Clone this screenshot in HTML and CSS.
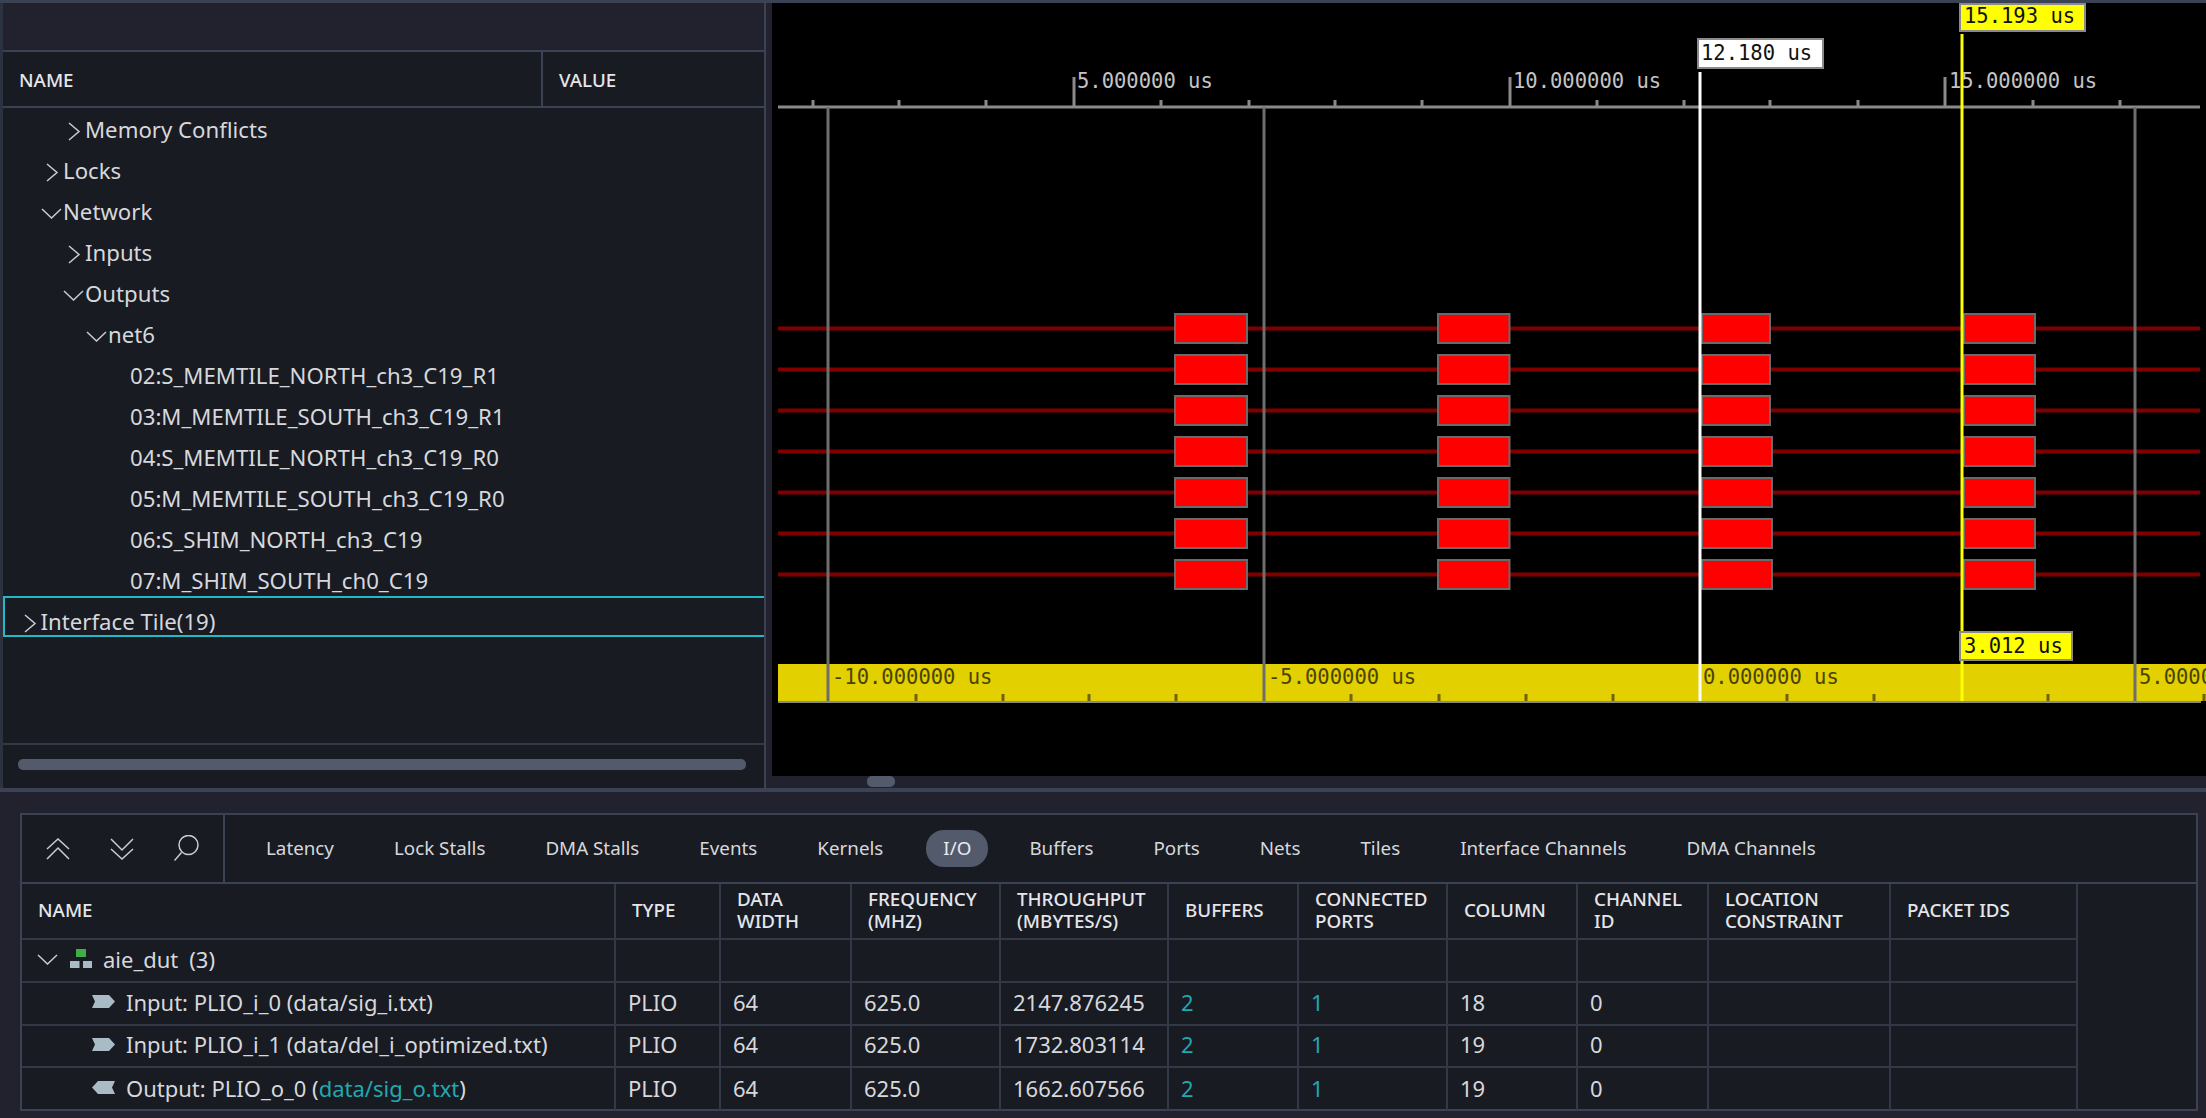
FILE: index.html
```html
<!DOCTYPE html>
<html lang="en">
<head>
    <meta charset="UTF-8">
    <title>Trace View</title>
    <link rel="stylesheet" href="styles.css">
</head>
<body>
    <svg width="0" height="0" class="defs">
        <defs>
            <path id="chev-right" d="M1 1 L11 9.5 L1 18" />
            <path id="chev-down" d="M1 1 L10.5 10 L20 1" />
            <polygon id="port-in" points="0,0 17,0 23,6.5 17,13 0,13 3,6.5" />
            <polygon id="port-out" points="23,0 6,0 0,6.5 6,13 23,13 20,6.5" />
        </defs>
    </svg>

    <div class="top">
        <div class="side">
            <div class="side-band"></div>
            <div class="tree-head">
                <div class="tree-name">NAME</div>
                <div class="tree-value">VALUE</div>
            </div>
            <div class="tree">
                <div class="row lvl2"><svg class="chev-r"><use href="#chev-right"/></svg>Memory Conflicts</div>
                <div class="row lvl1"><svg class="chev-r"><use href="#chev-right"/></svg>Locks</div>
                <div class="row lvl1"><svg class="chev-d"><use href="#chev-down"/></svg>Network</div>
                <div class="row lvl2"><svg class="chev-r"><use href="#chev-right"/></svg>Inputs</div>
                <div class="row lvl2"><svg class="chev-d"><use href="#chev-down"/></svg>Outputs</div>
                <div class="row lvl3"><svg class="chev-d"><use href="#chev-down"/></svg>net6</div>
                <div class="row lvl4">02:S_MEMTILE_NORTH_ch3_C19_R1</div>
                <div class="row lvl4">03:M_MEMTILE_SOUTH_ch3_C19_R1</div>
                <div class="row lvl4">04:S_MEMTILE_NORTH_ch3_C19_R0</div>
                <div class="row lvl4">05:M_MEMTILE_SOUTH_ch3_C19_R0</div>
                <div class="row lvl4">06:S_SHIM_NORTH_ch3_C19</div>
                <div class="row lvl4 last">07:M_SHIM_SOUTH_ch0_C19</div>
                <div class="row lvl0 selected"><svg class="chev-r"><use href="#chev-right"/></svg>Interface Tile(19)</div>
            </div>
            <div class="side-scroll"><div class="side-thumb"></div></div>
        </div>

        <div class="wave-wrap">
            <svg class="wave" width="1434" height="773" viewBox="772 3 1434 773">
                <defs>
                    <g id="sig">
                        <line class="sig-line" x1="778" x2="2200" y1="328.5" y2="328.5"/>
                        <rect class="block" x="1175" y="314" width="72" height="29"/>
                        <rect class="block" x="1438" y="314" width="71.5" height="29"/>
                        <rect class="block" x="1964" y="314" width="71" height="29"/>
                    </g>
                    <path id="ticks" d="M813 100V107M899 100V107M986 100V107M1074 77V107M1161 100V107M1249 100V107M1335 100V107M1422 100V107M1510 77V107M1597 100V107M1684 100V107M1770 100V107M1858 100V107M1945 77V107M2033 100V107M2120 100V107"/>
                </defs>

                <!-- ruler -->
                <line class="ruler" x1="778" x2="2200" y1="107" y2="107"/>
                <use href="#ticks" class="tick"/>
                <text class="tlabel" x="1077" y="88">5.000000 us</text>
                <text class="tlabel" x="1513" y="88">10.000000 us</text>
                <text class="tlabel" x="1949" y="88">15.000000 us</text>

                <!-- signals -->
                <use href="#sig"/>
                <use href="#sig" y="41"/>
                <use href="#sig" y="82"/>
                <use href="#sig" y="123"/>
                <use href="#sig" y="164"/>
                <use href="#sig" y="205"/>
                <use href="#sig" y="246"/>
                <rect class="block" x="1702" y="314" width="68" height="29"/>
                <rect class="block" x="1702" y="355" width="68" height="29"/>
                <rect class="block" x="1702" y="396" width="68" height="29"/>
                <rect class="block" x="1702" y="437" width="70" height="29"/>
                <rect class="block" x="1702" y="478" width="70" height="29"/>
                <rect class="block" x="1702" y="519" width="70" height="29"/>
                <rect class="block" x="1702" y="560" width="70" height="29"/>

                <!-- delta band -->
                <rect class="band" x="778" y="664" width="1428" height="37"/>
                <line class="band-edge" x1="778" x2="2201" y1="702" y2="702"/>
                <path class="band-tick" d="M916 694V701M1003 694V701M1089 694V701M1176 694V701M1351 694V701M1439 694V701M1526 694V701M1613 694V701M1787 694V701M1874 694V701M2048 694V701M2204 694V701"/>
                <text class="blabel" x="832" y="684">-10.000000 us</text>
                <text class="blabel" x="1268" y="684">-5.000000 us</text>
                <text class="blabel" x="1703" y="684">0.000000 us</text>
                <text class="blabel" x="2139" y="684">5.000000 us</text>

                <!-- cursors -->
                <line class="grid" x1="828" x2="828" y1="107" y2="701"/>
                <line class="grid" x1="1264" x2="1264" y1="107" y2="701"/>
                <line class="grid" x1="2135" x2="2135" y1="107" y2="701"/>
                <line class="cur-white" x1="1700" x2="1700" y1="72" y2="701"/>
                <line class="cur-yellow" x1="1962" x2="1962" y1="34" y2="701"/>

                <rect class="mark-white" x="1698" y="39" width="125" height="29"/>
                <text class="mlabel" x="1701" y="60">12.180 us</text>
                <rect class="mark-yellow" x="1960" y="4" width="125" height="27"/>
                <text class="mlabel" x="1964" y="23">15.193 us</text>
                <rect class="mark-yellow" x="1960" y="632" width="112" height="28"/>
                <text class="mlabel" x="1964" y="653">3.012 us</text>
            </svg>
            <div class="wave-scroll"><div class="wave-thumb"></div></div>
        </div>
    </div>

    <div class="bottom">
        <div class="box">
            <div class="toolbar">
                <div class="tools">
                    <svg class="tool" width="24" height="22" viewBox="0 0 24 22"><path d="M1 11 L12 1 L23 11M1 21 L12 10 L23 21"/></svg>
                    <svg class="tool" width="24" height="22" viewBox="0 0 24 22"><path d="M1 1 L12 12 L23 1M1 11 L12 21 L23 11"/></svg>
                    <svg class="tool" width="26" height="27" viewBox="0 0 26 27"><circle cx="14.5" cy="10" r="9.5"/><path d="M7.5 17.5 L0.5 25.5"/></svg>
                </div>
                <div class="tabs">
                    <span class="tab">Latency</span>
                    <span class="tab">Lock Stalls</span>
                    <span class="tab">DMA Stalls</span>
                    <span class="tab">Events</span>
                    <span class="tab">Kernels</span>
                    <span class="tab active">I/O</span>
                    <span class="tab">Buffers</span>
                    <span class="tab">Ports</span>
                    <span class="tab">Nets</span>
                    <span class="tab">Tiles</span>
                    <span class="tab">Interface Channels</span>
                    <span class="tab">DMA Channels</span>
                </div>
            </div>
            <table class="grid-table">
                <colgroup>
                    <col class="c-name"><col class="c-type"><col class="c-width"><col class="c-freq"><col class="c-thr">
                    <col class="c-buf"><col class="c-conn"><col class="c-col"><col class="c-chan"><col class="c-loc"><col class="c-pkt">
                </colgroup>
                <thead>
                    <tr>
                        <th>NAME</th><th>TYPE</th><th>DATA<br>WIDTH</th><th>FREQUENCY<br>(MHZ)</th><th>THROUGHPUT<br>(MBYTES/S)</th>
                        <th>BUFFERS</th><th>CONNECTED<br>PORTS</th><th>COLUMN</th><th>CHANNEL<br>ID</th><th>LOCATION<br>CONSTRAINT</th><th>PACKET IDS</th>
                    </tr>
                </thead>
                <tbody>
                    <tr>
                        <td>
                            <div class="group">
                                <svg class="chev-d table-chev"><use href="#chev-down"/></svg>
                                <svg class="hier" width="22" height="19" viewBox="0 0 22 19"><rect class="hier-top" x="6" y="0" width="10" height="8"/><rect class="hier-low" x="0" y="12" width="9.5" height="7"/><rect class="hier-low" x="13" y="12" width="9" height="7"/></svg>
                                <span>aie_dut</span><span class="count">(3)</span>
                            </div>
                        </td>
                        <td></td><td></td><td></td><td></td><td></td><td></td><td></td><td></td><td></td><td></td>
                    </tr>
                    <tr>
                        <td><div class="port"><svg class="port-icon"><use href="#port-in"/></svg><span>Input: PLIO_i_0 (data/sig_i.txt)</span></div></td>
                        <td>PLIO</td><td>64</td><td>625.0</td><td>2147.876245</td><td class="link">2</td><td class="link">1</td><td>18</td><td>0</td><td></td><td></td>
                    </tr>
                    <tr>
                        <td><div class="port"><svg class="port-icon"><use href="#port-in"/></svg><span>Input: PLIO_i_1 (data/del_i_optimized.txt)</span></div></td>
                        <td>PLIO</td><td>64</td><td>625.0</td><td>1732.803114</td><td class="link">2</td><td class="link">1</td><td>19</td><td>0</td><td></td><td></td>
                    </tr>
                    <tr>
                        <td><div class="port"><svg class="port-icon"><use href="#port-out"/></svg><span>Output: PLIO_o_0 (<span class="link">data/sig_o.txt</span>)</span></div></td>
                        <td>PLIO</td><td>64</td><td>625.0</td><td>1662.607566</td><td class="link">2</td><td class="link">1</td><td>19</td><td>0</td><td></td><td></td>
                    </tr>
                </tbody>
            </table>
        </div>
    </div>
</body>
</html>
```

FILE: styles.css
```css
* {
    box-sizing: border-box;
}
html, body {
    margin: 0;
    height: 100%;
    overflow: hidden;
}
body {
    width: 2206px;
    height: 1118px;
    background-color: #21222d;
    color: #d6d8dc;
    font-family: "Noto Sans", "Open Sans", sans-serif;
    font-size: 22.2px;
    border-top: 3px solid #3a4254;
}
.defs {
    position: absolute;
}
.top {
    display: flex;
    height: 785px;
}

/* left tree panel */
.side {
    width: 766px;
    background-color: #191b23;
    border-left: 3px solid #2c3240;
    border-right: 2px solid #3a4254;
    display: flex;
    flex-direction: column;
}
.side-band {
    height: 49px;
    background-color: #21222d;
    border-bottom: 2px solid #3a4254;
}
.tree-head {
    display: flex;
    height: 56px;
    border-bottom: 2px solid #3a4254;
    font-size: 18.8px;
    font-weight: 500;
    color: #e4e6ea;
    align-items: center;
}
.tree-name {
    width: 540px;
    height: 100%;
    padding: 15px 0 0 16px;
    border-right: 2px solid #3a4254;
}
.tree-value {
    padding: 15px 0 0 16px;
    height: 100%;
}
.tree {
    height: 637px;
    padding-top: 1px;
    border-bottom: 2px solid #323846;
}
.row {
    height: 41px;
    line-height: 41px;
    display: flex;
    align-items: center;
    white-space: nowrap;
}
.row svg {
    fill: none;
    stroke: #c9ccd2;
    stroke-width: 1.5;
    flex: none;
}
.chev-r {
    width: 13px;
    height: 19px;
    margin-right: 4px;
    margin-top: 4px;
}
.chev-d {
    width: 21px;
    height: 11px;
    margin-right: 1px;
    margin-left: -5px;
    margin-top: 4px;
    fill: none;
    stroke: #c9ccd2;
    stroke-width: 1.5;
}
.lvl1 { padding-left: 43px; }
.lvl2 { padding-left: 65px; }
.lvl3 { padding-left: 88px; }
.lvl4 { padding-left: 127px; }
.last {
    height: 36px;
    padding-top: 5px;
}
.selected {
    height: 41px;
    line-height: 45px;
    border-top: 2px solid #22b8c4;
    border-bottom: 2px solid #22b8c4;
    border-left: 2px solid #22b8c4;
    padding-top: 10px;
    padding-left: 18.5px;
    overflow: hidden;
}
.side-scroll {
    flex: 1;
    padding: 14px 18px 0 15px;
}
.side-thumb {
    height: 11px;
    border-radius: 5px;
    background-color: #535a6b;
}

/* waveform */
.wave-wrap {
    flex: 1;
    padding-left: 6px;
    display: flex;
    flex-direction: column;
}
.wave {
    display: block;
    background-color: #000;
    flex: none;
}
.wave-scroll {
    height: 11px;
    background-color: #21222d;
}
.wave-thumb {
    width: 28px;
    height: 11px;
    margin-left: 95px;
    background-color: #535a6b;
    border-radius: 5px;
}
.ruler {
    stroke: #8a8a8a;
    stroke-width: 3;
}
.tick {
    stroke: #8a8a8a;
    stroke-width: 3;
    fill: none;
}
.tlabel, .blabel, .mlabel {
    font-family: "DejaVu Sans Mono", monospace;
    font-size: 20.5px;
}
.tlabel {
    fill: #c4c4c4;
}
.blabel {
    fill: #4a4300;
}
.mlabel {
    fill: #111;
}
.sig-line {
    stroke: #800000;
    stroke-width: 4;
}
.block {
    fill: #ff0000;
    stroke: #6a6a6a;
    stroke-width: 2;
}
.band {
    fill: #e2d000;
}
.band-edge {
    stroke: #8a8a8a;
    stroke-width: 2;
}
.band-tick {
    stroke: #6e6400;
    stroke-width: 3;
}
.grid {
    stroke: #6e6e6e;
    stroke-width: 3;
}
.cur-white {
    stroke: #fff;
    stroke-width: 3;
}
.cur-yellow {
    stroke: #ffff00;
    stroke-width: 3;
}
.mark-white {
    fill: #fff;
    stroke: #8a8a8a;
    stroke-width: 2;
}
.mark-yellow {
    fill: #ffff00;
    stroke: #8a8a8a;
    stroke-width: 2;
}

/* bottom table panel */
.bottom {
    height: 330px;
    border-top: 4px solid #3a4254;
    padding: 21px 8px 0 20px;
}
.box {
    border: 2px solid #3a4254;
    background-color: #191b23;
    height: 298px;
}
.toolbar {
    display: flex;
    height: 69px;
    border-bottom: 2px solid #3a4254;
}
.tools {
    width: 203px;
    border-right: 2px solid #3a4254;
    display: flex;
    align-items: center;
    gap: 40px;
    padding-left: 24px;
}
.tool {
    fill: none;
    stroke: #c9ccd2;
    stroke-width: 1.5;
    flex: none;
}
.tabs {
    display: flex;
    align-items: center;
    padding-left: 24px;
    gap: 26px;
    font-size: 18.8px;
}
.tab {
    padding: 0 17px;
    height: 37px;
    line-height: 37px;
    border-radius: 18px;
    color: #d6d8dc;
    white-space: nowrap;
}
.tab.active {
    background-color: #535a6b;
    color: #e8eaee;
    margin-right: -2px;
}
.grid-table {
    border-collapse: collapse;
    table-layout: fixed;
    width: 2056px;
}
.c-name { width: 593px; }
.c-type { width: 105px; }
.c-width { width: 131px; }
.c-freq { width: 149px; }
.c-thr { width: 168px; }
.c-buf { width: 130px; }
.c-conn { width: 149px; }
.c-col { width: 130px; }
.c-chan { width: 131px; }
.c-loc { width: 182px; }
.c-pkt { width: 187px; }
th {
    height: 55px;
    padding: 0 0 2px 16px;
    font-size: 18.8px;
    font-weight: 500;
    line-height: 22.5px;
    text-align: left;
    color: #e4e6ea;
    border: 2px solid #323846;
    border-top: none;
}
th:first-child, td:first-child {
    border-left: none;
}
td {
    height: 42.8px;
    padding: 0 0 3px 12px;
    line-height: 26px;
    font-size: 22px;
    white-space: nowrap;
    border: 2px solid #323846;
}
tbody tr:last-child td {
    border-bottom: none;
}
.link {
    color: #22a8b0;
}
.group, .port {
    display: flex;
    align-items: center;
}
.group .table-chev {
    margin: 2px 12px 0 3px;
}
.hier {
    margin-right: 11px;
}
.hier-top {
    fill: #3fae49;
}
.hier-low {
    fill: #a9bcc6;
}
.count {
    margin-left: 11px;
}
.port {
    padding-left: 58px;
}
.port-icon {
    width: 23px;
    height: 13px;
    margin-right: 11px;
    fill: #a9bcc6;
    flex: none;
}
```
